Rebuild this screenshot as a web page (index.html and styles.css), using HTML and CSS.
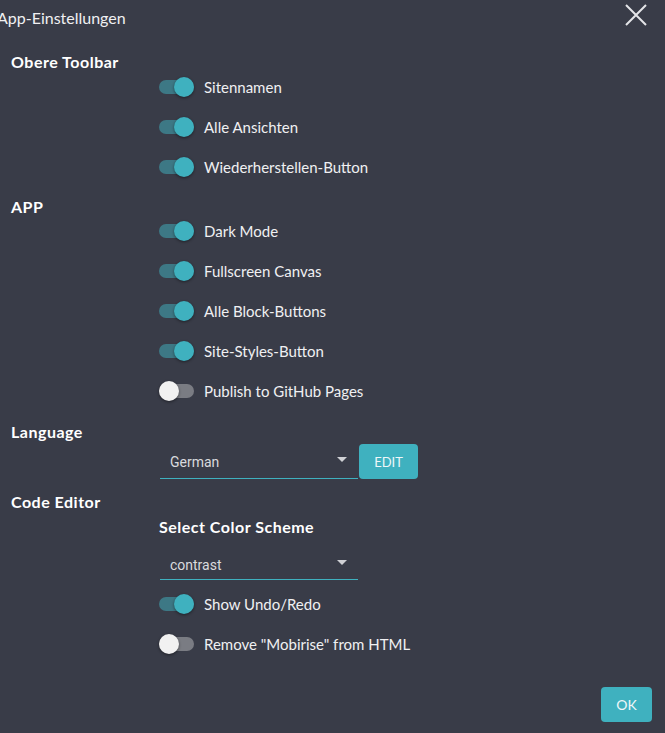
FILE: index.html
```html
<!DOCTYPE html>
<html lang="de">
<head>
<meta charset="utf-8">
<title>App-Einstellungen</title>
<link rel="stylesheet" href="styles.css">
</head>
<body>
<div class="dialog">
  <header class="head">
    <h1 class="title">App-Einstellungen</h1>
    <button class="close" aria-label="Schließen">
      <svg width="22" height="22" viewBox="0 0 22 22"><path d="M1 1L21 21M21 1L1 21" stroke="#e4e5e8" stroke-width="2" fill="none"/></svg>
    </button>
  </header>

  <section class="group">
    <h2 class="heading">Obere Toolbar</h2>
    <div class="rows">
      <label class="row"><span class="toggle on"></span>Sitennamen</label>
      <label class="row"><span class="toggle on"></span>Alle Ansichten</label>
      <label class="row"><span class="toggle on"></span>Wiederherstellen-Button</label>
    </div>
  </section>

  <section class="group">
    <h2 class="heading">APP</h2>
    <div class="rows tight">
      <label class="row"><span class="toggle on"></span>Dark Mode</label>
      <label class="row"><span class="toggle on"></span>Fullscreen Canvas</label>
      <label class="row"><span class="toggle on"></span>Alle Block-Buttons</label>
      <label class="row"><span class="toggle on"></span>Site-Styles-Button</label>
      <label class="row"><span class="toggle"></span>Publish to GitHub Pages</label>
    </div>
  </section>

  <section class="group">
    <h2 class="heading">Language</h2>
    <div class="lang">
      <div class="select"><span>German</span><span class="caret"></span></div>
      <button class="btn edit">EDIT</button>
    </div>
  </section>

  <section class="group code">
    <h2 class="heading">Code Editor</h2>
    <div class="indent">
      <h3 class="sub">Select Color Scheme</h3>
      <div class="select scheme"><span>contrast</span><span class="caret"></span></div>
    </div>
    <div class="rows undo">
      <label class="row"><span class="toggle on"></span>Show Undo/Redo</label>
      <label class="row"><span class="toggle"></span>Remove "Mobirise" from HTML</label>
    </div>
  </section>

  <footer class="foot">
    <button class="btn ok">OK</button>
  </footer>
</div>
</body>
</html>
```

FILE: styles.css
```css
* { box-sizing: border-box; }
html, body { margin: 0; padding: 0; }
body {
  background: #393c48;
  color: #f2f2f4;
  font-family: "Lato", "Open Sans", sans-serif;
  width: 665px;
  height: 733px;
  overflow: hidden;
}
.dialog {
  display: flex;
  flex-direction: column;
  height: 733px;
  padding: 0 13px 11px 11px;
}
.head {
  display: flex;
  justify-content: space-between;
  align-items: flex-start;
  height: 50px;
}
.title {
  margin: 8px 0 0 -14px;
  font-size: 16px;
  font-weight: 400;
  line-height: 20px;
  color: #f0f0f2;
}
.close {
  background: none;
  border: 0;
  padding: 0;
  margin: 4px 5px 0 0;
  width: 22px;
  height: 22px;
  cursor: pointer;
}
.close svg { display: block; }
.group { display: flex; flex-direction: column; }
.heading {
  margin: 0;
  font-size: 16px;
  font-weight: 700;
  letter-spacing: 0.5px;
  line-height: 24px;
  color: #ffffff;
}
.rows {
  display: flex;
  flex-direction: column;
  gap: 16px;
  padding: 1px 0 16px 148px;
}
.rows.tight { padding-top: 0; padding-bottom: 17px; }
.row {
  display: flex;
  align-items: center;
  height: 24px;
  font-size: 15px;
  line-height: 22px;
  color: #f0f0f2;
  gap: 10px;
}
.toggle {
  position: relative;
  width: 35px;
  height: 14px;
  border-radius: 7px;
  background: #7a7c83;
  flex: none;
}
.toggle::after {
  content: "";
  position: absolute;
  top: -3px;
  left: 0;
  width: 20px;
  height: 20px;
  border-radius: 50%;
  background: #f1f1f1;
  box-shadow: 0 1px 3px rgba(0,0,0,0.45);
}
.toggle.on { background: #3d7885; }
.toggle.on::after { left: 15px; background: #3fb1bf; }
.lang {
  display: flex;
  align-items: stretch;
  padding-left: 149px;
  height: 35px;
}
.select {
  width: 198px;
  display: flex;
  align-items: center;
  justify-content: space-between;
  padding: 2px 11px 0 10px;
  border-bottom: 1px solid #3fb1bf;
  font-family: "Roboto", sans-serif;
  font-size: 14px;
  color: #d9dade;
}
.caret {
  width: 0;
  height: 0;
  border-left: 5px solid transparent;
  border-right: 5px solid transparent;
  border-top: 5px solid #d0d1d5;
  margin-bottom: 5px;
}
.btn {
  background: #3fb1bf;
  border: 0;
  border-radius: 4px;
  color: #eef7f9;
  font-family: "Lato", sans-serif;
  font-size: 13px;
  cursor: pointer;
}
.edit { width: 59px; margin-left: 1px; }
.code { margin-top: 11px; }
.indent { padding-left: 148px; display: flex; flex-direction: column; }
.sub {
  margin: 1px 0 0;
  font-size: 16px;
  font-weight: 700;
  letter-spacing: 0.5px;
  line-height: 24px;
  color: #ffffff;
}
.scheme { height: 32px; margin: 9px 0 0 1px; }
.rows.undo { padding-top: 12px; padding-bottom: 0; }
.foot {
  margin-top: auto;
  display: flex;
  justify-content: flex-end;
}
.ok { width: 51px; height: 35px; font-size: 14px; }
```
